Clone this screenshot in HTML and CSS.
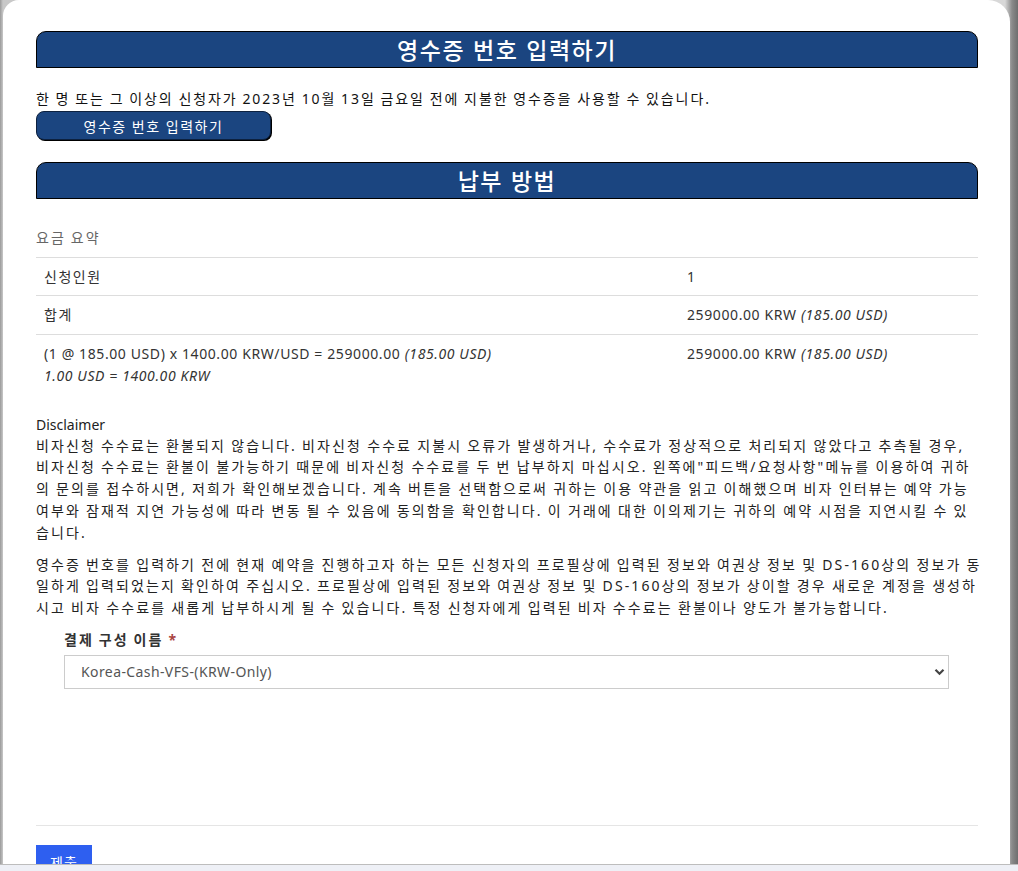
FILE: index.html
```html
<!DOCTYPE html>
<html lang="ko">
<head>
<meta charset="utf-8">
<title>영수증 번호 입력하기</title>
<link rel="stylesheet" href="styles.css">
</head>
<body>
<div class="card">
  <h2 class="section-head">영수증 번호 입력하기</h2>
  <p class="intro">한 명 또는 그 이상의 신청자가 2023년 10월 13일 금요일 전에 지불한 영수증을 사용할 수 있습니다.</p>
  <button class="receipt-btn" type="button">영수증 번호 입력하기</button>

  <h2 class="section-head second">납부 방법</h2>

  <table class="fees">
    <caption>요금 요약</caption>
    <tbody>
      <tr>
        <td class="c1 ko">신청인원</td>
        <td class="c2">1</td>
      </tr>
      <tr>
        <td class="c1 ko">합계</td>
        <td class="c2">259000.00 KRW <em>(185.00 USD)</em></td>
      </tr>
      <tr>
        <td class="c1">(1 @ 185.00 USD) x 1400.00 KRW/USD = 259000.00 <em>(185.00 USD)</em><br><em>1.00 USD = 1400.00 KRW</em></td>
        <td class="c2">259000.00 KRW <em>(185.00 USD)</em></td>
      </tr>
    </tbody>
  </table>

  <div class="disclaimer">
    <div class="disc-title">Disclaimer</div>
    <p>비자신청 수수료는 환불되지 않습니다. 비자신청 수수료 지불시 오류가 발생하거나, 수수료가 정상적으로 처리되지 않았다고 추측될 경우,<br>비자신청 수수료는 환불이 불가능하기 때문에 비자신청 수수료를 두 번 납부하지 마십시오. 왼쪽에"피드백/요청사항"메뉴를 이용하여 귀하<br>의 문의를 접수하시면, 저희가 확인해보겠습니다. 계속 버튼을 선택함으로써 귀하는 이용 약관을 읽고 이해했으며 비자 인터뷰는 예약 가능<br>여부와 잠재적 지연 가능성에 따라 변동 될 수 있음에 동의함을 확인합니다. 이 거래에 대한 이의제기는 귀하의 예약 시점을 지연시킬 수 있<br>습니다.</p>
    <p>영수증 번호를 입력하기 전에 현재 예약을 진행하고자 하는 모든 신청자의 프로필상에 입력된 정보와 여권상 정보 및 DS-160상의 정보가 동<br>일하게 입력되었는지 확인하여 주십시오. 프로필상에 입력된 정보와 여권상 정보 및 DS-160상의 정보가 상이할 경우 새로운 계정을 생성하<br>시고 비자 수수료를 새롭게 납부하시게 될 수 있습니다. 특정 신청자에게 입력된 비자 수수료는 환불이나 양도가 불가능합니다.</p>
  </div>

  <div class="form-group">
    <label class="field-label" for="payconf">결제 구성 이름 <span class="req">*</span></label>
    <div class="select-wrap">
      <select id="payconf" class="field-select">
        <option>Korea-Cash-VFS-(KRW-Only)</option>
      </select>
      <svg class="chevron" width="11" height="8" viewBox="0 0 11 8" aria-hidden="true"><path d="M1.5 1.8 L5.5 5.8 L9.5 1.8" fill="none" stroke="#444" stroke-width="2.2"/></svg>
    </div>
  </div>

  <hr class="divider">
  <button class="submit-btn" type="submit">제출</button>
</div>
<div class="bottom-bar"></div>
</body>
</html>
```

FILE: styles.css
```css
html, body {
  margin: 0;
  padding: 0;
  height: 100%;
}
body {
  background: linear-gradient(to right, #9a9a9a 0, #c8c8c8 3px, #d8d8d8 1005px, #8a8a8a 1012px, #6e6e6e 1018px);
  font-family: "Noto Sans", "Noto Sans CJK KR", sans-serif;
  font-size: 14px;
  color: #222;
  overflow: hidden;
}
.card {
  margin: 0 8px 0 3px;
  min-height: 900px;
  background: #fff;
  border-radius: 16px 22px 0 0;
  padding: 31px 32px 0 33px;
  box-sizing: border-box;
}
.section-head {
  margin: 0;
  height: 37px;
  box-sizing: border-box;
  background: #1b4580;
  border: 1px solid #000;
  border-radius: 10px 10px 0 0;
  color: #fff;
  text-align: center;
  font-family: "Noto Sans CJK KR", "Noto Sans", sans-serif;
  font-weight: 500;
  font-size: 23px;
  line-height: 34px;
  letter-spacing: 1.5px;
}
.section-head.second {
  margin-top: 22px;
}
.intro {
  margin: 21px 0 2px;
  line-height: 20px;
  color: #111;
  letter-spacing: 1.9px;
  word-spacing: -0.7px;
}
.receipt-btn {
  display: block;
  width: 235px;
  height: 29px;
  background: #1b4580;
  color: #fff;
  border: 1px solid #0d213f;
  border-radius: 8px;
  box-shadow: 1px 1px 0 #000;
  font-family: "Noto Sans CJK KR", "Noto Sans", sans-serif;
  font-size: 14px;
  letter-spacing: 1.6px;
  word-spacing: -0.6px;
  padding: 0;
}
.fees {
  width: 100%;
  border-collapse: collapse;
  margin-top: 20px;
  color: #333;
  letter-spacing: 0.6px;
}
.fees caption {
  text-align: left;
  color: #666;
  padding: 8px 0;
  line-height: 21.7px;
  letter-spacing: 2px;
  word-spacing: -0.6px;
}
.fees td {
  border-top: 1px solid #ddd;
  padding: 8px;
  line-height: 21.7px;
  vertical-align: top;
}
.fees td.ko {
  letter-spacing: 1.5px;
}
.fees td.c1 {
  width: 627px;
}
.fees em {
  font-style: italic;
}
.disclaimer {
  margin-top: 20px;
  color: #222;
}
.disc-title {
  line-height: 20px;
}
.disclaimer p {
  margin: 0 0 10px;
  line-height: 21.8px;
  white-space: nowrap;
  letter-spacing: 2.1px;
  word-spacing: -0.6px;
}
.form-group {
  margin: 11px 29px 0 28px;
}
.field-label {
  display: block;
  font-weight: 700;
  color: #333;
  line-height: 20px;
  margin-bottom: 5px;
  letter-spacing: 2px;
  word-spacing: -0.6px;
}
.req {
  color: #a94442;
}
.select-wrap {
  position: relative;
}
.field-select {
  display: block;
  width: 100%;
  height: 34px;
  box-sizing: border-box;
  border: 1px solid #ccc;
  border-radius: 0;
  background: #fff;
  appearance: none;
  -webkit-appearance: none;
  padding: 0 16px;
  font-family: "Noto Sans", "Noto Sans CJK KR", sans-serif;
  font-size: 14px;
  letter-spacing: 0.4px;
  color: #555;
}
.chevron {
  position: absolute;
  right: 4px;
  top: 13px;
}
.divider {
  margin: 136px 0 0;
  border: 0;
  border-top: 1px solid #e5e5e5;
}
.submit-btn {
  display: block;
  margin-top: 19px;
  width: 56px;
  height: 34px;
  background: #2e5ff0;
  color: #fff;
  border: 0;
  border-radius: 0;
  font-family: "Noto Sans CJK KR", "Noto Sans", sans-serif;
  font-size: 14px;
  letter-spacing: 1px;
  padding: 0;
}
.bottom-bar {
  position: fixed;
  left: 0;
  right: 0;
  bottom: 0;
  height: 6px;
  background: #eef0f6;
  border-top: 1px solid #bdbdbd;
}
```
